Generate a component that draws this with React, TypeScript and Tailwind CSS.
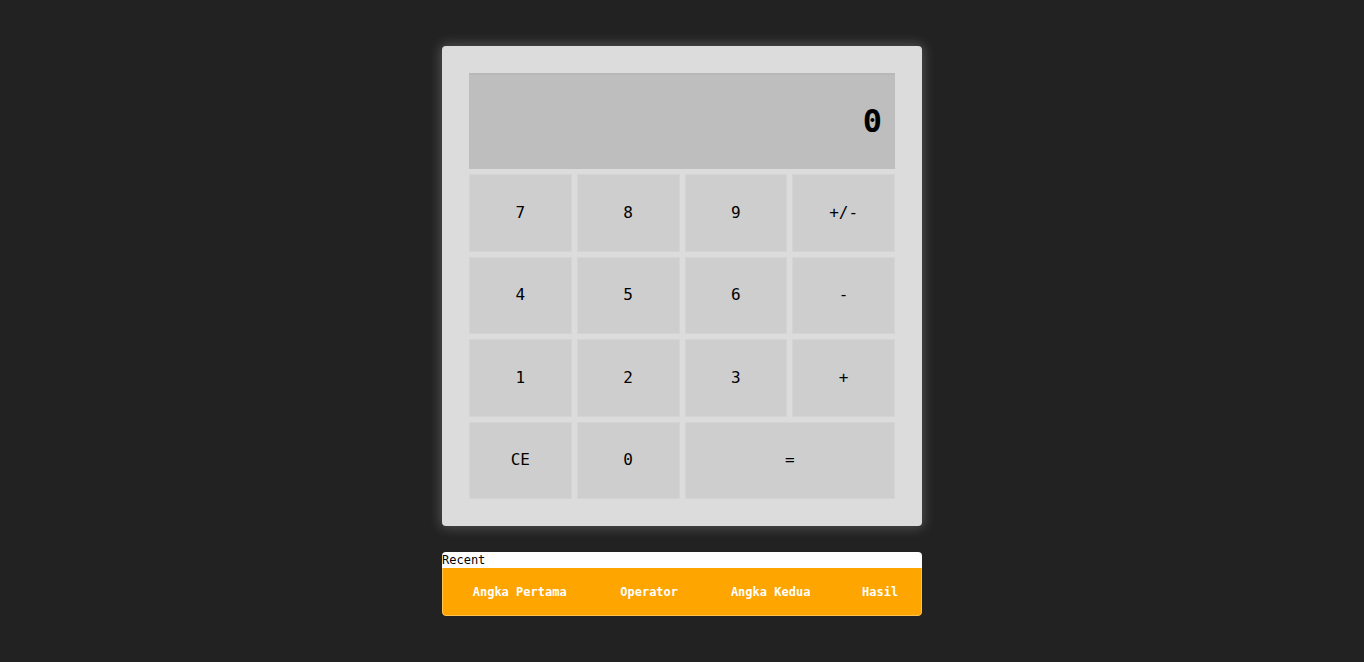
const keys: { label: string; wide?: boolean }[] = [
  { label: "7" },
  { label: "8" },
  { label: "9" },
  { label: "+/-" },
  { label: "4" },
  { label: "5" },
  { label: "6" },
  { label: "-" },
  { label: "1" },
  { label: "2" },
  { label: "3" },
  { label: "+" },
  { label: "CE" },
  { label: "0" },
  { label: "=", wide: true },
];

const cols = [
  { label: "Angka Pertama", w: "w-[154px]" },
  { label: "Operator", w: "w-[106px]" },
  { label: "Angka Kedua", w: "w-[138px]" },
  { label: "Hasil", w: "w-[82px]" },
];

export default function App() {
  return (
    <div className="min-h-screen bg-[#222222] flex flex-col items-center pt-[46px] font-['DejaVu_Sans_Mono',monospace]">
      {/* kalkulator */}
      <div className="w-[480px] h-[480px] bg-[#dcdcdc] rounded-[4px] p-[27px] shadow-[0_0_12px_2px_rgba(220,220,220,0.25)]">
        <div className="h-[96px] bg-[#bebebe] border-t-2 border-[#b8b8b8] flex items-center justify-end pr-[13px] pb-[2px]">
          <span className="text-[32px] font-bold text-black leading-none">0</span>
        </div>
        <div className="grid grid-cols-4 gap-x-[5px] gap-y-[5px] mt-[5px]">
          {keys.map((k) => (
            <button
              key={k.label}
              className={`h-[77.5px] bg-[#cecece] border border-[#d4d4d4] text-[16px] text-black flex items-center justify-center ${
                k.wide ? "col-span-2" : ""
              }`}
            >
              {k.label}
            </button>
          ))}
        </div>
      </div>

      {/* riwayat */}
      <div className="w-[480px] mt-[26px] rounded-[4px] overflow-hidden">
        <div className="bg-white text-black text-[12px] leading-[16px] h-[16px]">Recent</div>
        <div className="flex h-[48px] bg-[#ffa500] items-center border border-[#ffc44d] border-t-0 rounded-b-[4px]">
          {cols.map((c) => (
            <div
              key={c.label}
              className={`${c.w} text-center text-white text-[12px] font-bold`}
            >
              {c.label}
            </div>
          ))}
        </div>
      </div>
    </div>
  );
}
